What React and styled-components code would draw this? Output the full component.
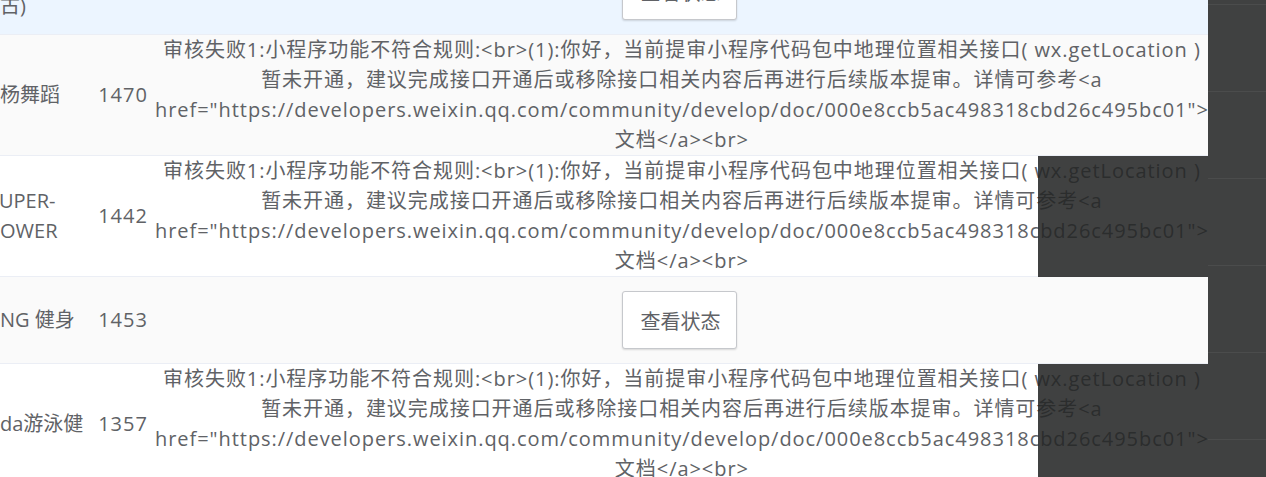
import React from "react"
import styled, { createGlobalStyle } from "styled-components"

const GlobalStyle = createGlobalStyle`
  html, body {
    margin: 0;
    padding: 0;
    background: #ffffff;
    overflow: hidden;
  }
  body {
    font-family: "Open Sans", "Noto Sans CJK SC", sans-serif;
    color: #606266;
  }
`

const shade = "rgba(36, 37, 37, 0.87)"

const Page = styled.div`
  display: flex;
  align-items: flex-start;
  width: 1266px;
  height: 477px;
  overflow: hidden;
`

const Table = styled.div`
  flex: none;
  width: 1208px;
  margin-top: -52px;
`

const tones = {
  current: "#ecf5ff",
  stripe: "#fafafa",
  plain: "#ffffff",
}

const Row = styled.div`
  position: relative;
  display: grid;
  grid-template-columns: 96px 54px 1fr;
  align-items: center;
  background: ${(p) => tones[p.$tone]};
  border-bottom: 1px solid #ebeef5;
  font-size: 20px;
  line-height: 30px;
  letter-spacing: 0.95px;

  ${(p) =>
    p.$masked &&
    `
    &::after {
      content: "";
      position: absolute;
      left: 1038px;
      right: 0;
      top: 0;
      bottom: -1px;
      background: ${shade};
    }
  `}
`

const NameCell = styled.div`
  overflow: hidden;
  letter-spacing: 0;
`

const NameText = styled.span`
  display: block;
  margin-left: ${(p) => p.$shift || 0}px;
`

const NumberCell = styled.div`
  text-align: center;
`

const MessageCell = styled.div`
  padding: 0 3px 0 5px;
  text-align: center;
`

const ActionCell = styled.div`
  display: flex;
  justify-content: center;
  padding: 14px 0;
`

const Button = styled.button`
  width: 115px;
  height: 58px;
  padding: 0 0 0 3px;
  border: 1px solid #c6c8cc;
  border-radius: 3px;
  background: #ffffff;
  box-shadow: 0 1px 2px rgba(0, 0, 0, 0.14);
  font-family: "Open Sans", "Noto Sans CJK SC", sans-serif;
  font-size: 20px;
  letter-spacing: 0;
  color: #606266;
`

const Strip = styled.div`
  flex: 1;
  align-self: stretch;
  background-color: ${shade};
  background-image: linear-gradient(to bottom, #4b4c4c 0, #4b4c4c 1px, transparent 1px);
  background-size: 100% 87px;
  background-position: 0 4px;
`

const reason =
  '审核失败1:小程序功能不符合规则:<br>(1):你好，当前提审小程序代码包中地理位置相关接口( wx.getLocation ) 暂未开通，建议完成接口开通后或移除接口相关内容后再进行后续版本提审。详情可参考<a href="https://developers.weixin.qq.com/community/develop/doc/000e8ccb5ac498318cbd26c495bc01">文档</a><br>'

const rows = [
  { name: "瑜伽(内蒙古)", id: 1488, tone: "current" },
  { name: "杨舞蹈", id: 1470, tone: "stripe", reason },
  { name: "SUPER-POWER", shift: -12, id: 1442, tone: "plain", reason, masked: true },
  { name: "NG 健身", id: 1453, tone: "stripe" },
  { name: "da游泳健", id: 1357, tone: "plain", reason, masked: true },
]

export default function App() {
  return (
    <Page>
      <GlobalStyle />
      <Table>
        {rows.map((row) => (
          <Row key={row.id} $tone={row.tone} $masked={row.masked}>
            <NameCell>
              <NameText $shift={row.shift}>{row.name}</NameText>
            </NameCell>
            <NumberCell>{row.id}</NumberCell>
            {row.reason ? (
              <MessageCell>{row.reason}</MessageCell>
            ) : (
              <ActionCell>
                <Button>查看状态</Button>
              </ActionCell>
            )}
          </Row>
        ))}
      </Table>
      <Strip />
    </Page>
  )
}
